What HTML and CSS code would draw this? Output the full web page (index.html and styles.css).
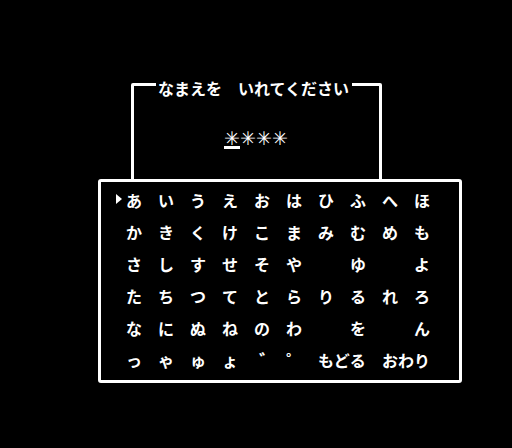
FILE: index.html
```html
<!DOCTYPE html>
<html lang="ja">
<head>
<meta charset="utf-8">
<title>なまえを いれてください</title>
<link rel="stylesheet" href="styles.css">
</head>
<body>
<div class="screen">
  <div class="name-window">
    <div class="name-head">
      <span class="seg seg-left"></span>
      <span class="title">なまえを　いれてください</span>
      <span class="seg seg-right"></span>
    </div>
    <div class="name-row"><span class="slot current">✳</span><span class="slot">✳</span><span class="slot">✳</span><span class="slot">✳</span></div>
  </div>
  <div class="kana-window">
    <div class="kana-grid">
      <span class="cell selected">あ</span><span class="cell">い</span><span class="cell">う</span><span class="cell">え</span><span class="cell">お</span><span class="cell">は</span><span class="cell">ひ</span><span class="cell">ふ</span><span class="cell">へ</span><span class="cell">ほ</span>
      <span class="cell">か</span><span class="cell">き</span><span class="cell">く</span><span class="cell">け</span><span class="cell">こ</span><span class="cell">ま</span><span class="cell">み</span><span class="cell">む</span><span class="cell">め</span><span class="cell">も</span>
      <span class="cell">さ</span><span class="cell">し</span><span class="cell">す</span><span class="cell">せ</span><span class="cell">そ</span><span class="cell">や</span><span class="cell"></span><span class="cell">ゆ</span><span class="cell"></span><span class="cell">よ</span>
      <span class="cell">た</span><span class="cell">ち</span><span class="cell">つ</span><span class="cell">て</span><span class="cell">と</span><span class="cell">ら</span><span class="cell">り</span><span class="cell">る</span><span class="cell">れ</span><span class="cell">ろ</span>
      <span class="cell">な</span><span class="cell">に</span><span class="cell">ぬ</span><span class="cell">ね</span><span class="cell">の</span><span class="cell">わ</span><span class="cell"></span><span class="cell">を</span><span class="cell"></span><span class="cell">ん</span>
      <span class="cell">っ</span><span class="cell">ゃ</span><span class="cell">ゅ</span><span class="cell">ょ</span><span class="cell mark voiced">゛</span><span class="cell mark">゜</span><span class="cell wide">もどる</span><span class="cell wide">おわり</span>
    </div>
  </div>
</div>
</body>
</html>
```
FILE: styles.css
```css
html, body {
  margin: 0;
  padding: 0;
  background: #000;
}

.screen {
  width: 512px;
  height: 448px;
  background: #000;
  color: #fff;
  font-family: "Noto Sans CJK JP", "Noto Sans", sans-serif;
  font-size: 16px;
  line-height: 16px;
  font-weight: 700;
  overflow: hidden;
  display: flex;
  flex-direction: column;
}

.name-window {
  display: flex;
  flex-direction: column;
  margin-top: 83px;
  margin-left: 131px;
  width: 251px;
  height: 96px;
  box-sizing: border-box;
  border-left: 3px solid #fff;
  border-right: 3px solid #fff;
  border-top-left-radius: 2px;
  border-top-right-radius: 2px;
}

.name-head {
  display: flex;
  align-items: flex-start;
  margin-top: -3px;
  height: 16px;
}

.seg {
  display: block;
  margin-top: 3px;
  height: 0;
  border-top: 3px solid #fff;
}

.seg-left {
  width: 22px;
}

.seg-right {
  flex: 1;
  margin-left: 3px;
}

.title {
  margin-left: 2px;
  white-space: nowrap;
}

.name-row {
  display: flex;
  justify-content: center;
  margin-top: 34px;
  margin-left: -1px;
}

.slot {
  display: block;
  width: 16px;
  height: 16px;
  font-family: "DejaVu Sans", sans-serif;
  font-weight: 700;
  font-size: 19px;
  line-height: 16px;
  text-align: center;
  border-bottom: 3px solid transparent;
}

.slot.current {
  border-bottom-color: #fff;
}

.kana-window {
  margin-left: 98px;
  width: 364px;
  height: 204px;
  box-sizing: border-box;
  border: 3px solid #fff;
  border-radius: 3px;
}

.kana-grid {
  display: grid;
  grid-template-columns: repeat(10, 32px);
  grid-auto-rows: 16px;
  row-gap: 16px;
  padding: 10px 0 0 25px;
}

.cell {
  display: block;
  position: relative;
  white-space: nowrap;
}

.cell.wide {
  grid-column: span 2;
}

.cell.mark {
  font-size: 18px;
}

.cell.voiced {
  padding-left: 5px;
}

.cell.selected::before {
  content: "";
  position: absolute;
  left: -10px;
  top: 2px;
  width: 0;
  height: 0;
  border-left: 6px solid #fff;
  border-top: 5px solid transparent;
  border-bottom: 5px solid transparent;
}
```
